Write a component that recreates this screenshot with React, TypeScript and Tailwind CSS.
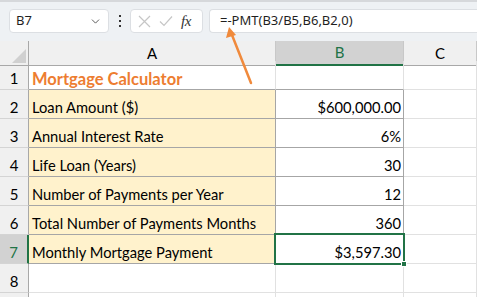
import { ChevronDown } from 'lucide-react'

const cellFont = { fontFamily: 'Lato, "Open Sans", sans-serif' }

type Row = { label: string; value: string }

const rows: Row[] = [
  { label: 'Loan Amount ($)', value: '$600,000.00' },
  { label: 'Annual Interest Rate', value: '6%' },
  { label: 'Life Loan (Years)', value: '30' },
  { label: 'Number of Payments per Year', value: '12' },
  { label: 'Total Number of Payments Months', value: '360' },
  { label: 'Monthly Mortgage Payment', value: '$3,597.30' },
]

function Toolbar() {
  return (
    <div className="h-[41px] bg-[#eef1f4] border-t-2 border-[#d6d8db] flex items-start pt-[7px] pl-[9px] font-['Segoe_UI','Noto_Sans',sans-serif] text-[13px] text-[#1f1f1f]">
      <div className="w-[100px] h-[24px] bg-white border border-[#dcdfe3] rounded-[4px] flex items-center justify-between pl-[6px] pr-[6px]">
        <span>B7</span>
        <ChevronDown className="w-[13px] h-[13px] text-[#444]" strokeWidth={1.6} />
      </div>
      <div className="w-[21px] h-[24px] flex flex-col items-center justify-center gap-[3px]">
        <span className="w-[2px] h-[2px] bg-[#333]" />
        <span className="w-[2px] h-[2px] bg-[#333]" />
        <span className="w-[2px] h-[2px] bg-[#333]" />
      </div>
      <div className="w-[73px] h-[24px] bg-white border border-[#dcdfe3] rounded-[4px] flex items-center pl-[7px] gap-[8px]">
        <svg width="13" height="13" viewBox="0 0 13 13" fill="none" stroke="#c6c6c6" strokeWidth="1.2">
          <path d="M1 1 L12 12 M12 1 L1 12" />
        </svg>
        <svg width="14" height="12" viewBox="0 0 14 12" fill="none" stroke="#c6c6c6" strokeWidth="1.2">
          <path d="M1 6.5 L5 10.5 L13 1.5" />
        </svg>
        <span className="italic text-[15px] text-[#333] font-['Liberation_Serif',serif] tracking-[-0.5px]">fx</span>
      </div>
      <div className="ml-[6px] flex-1 h-[24px] bg-white border border-r-0 border-[#dcdfe3] rounded-l-[4px] flex items-center pl-[10px]">
        <span>=-PMT(B3/B5,B6,B2,0)</span>
      </div>
    </div>
  )
}

function HeaderRow() {
  return (
    <div className="grid grid-cols-[29px_247px_128px_73px] h-[20px] text-[15px]" style={cellFont}>
      <div className="bg-[#f0f0f0] border-r border-b border-[#a8a8a8] relative overflow-hidden">
        <div className="absolute right-[2px] bottom-[2px] w-0 h-0 border-l-[14px] border-l-transparent border-b-[14px] border-b-[#d0d0d0]" />
      </div>
      <div className="bg-[#f0f0f0] border-r border-b border-[#c8c8c8] border-b-[#a8a8a8] flex items-center justify-center">A</div>
      <div className="bg-[#d2d2d2] border-r border-[#c8c8c8] border-b-2 border-b-[#217346] flex items-center justify-center text-[#217346]">B</div>
      <div className="bg-[#f0f0f0] border-r border-b border-[#c8c8c8] border-b-[#a8a8a8] flex items-center justify-center">C</div>
    </div>
  )
}

export default function App() {
  return (
    <div className="w-[477px] h-[297px] overflow-hidden bg-white relative">
      <Toolbar />
      <HeaderRow />
      <div className="grid grid-cols-[29px_247px_128px_73px] auto-rows-[29px] text-[14.7px] text-black" style={cellFont}>
        {/* row 1 */}
        <div className="bg-[#f0f0f0] border-r border-b border-r-[#a8a8a8] border-b-[#d4d4d4] flex items-center justify-center pt-[7px] text-[15px]">1</div>
        <div className="border-r border-b border-r-[#e1e1e1] border-b-[#a6a6a6] flex items-center pl-[3px] pt-[8px] font-bold text-[16.5px] text-[#ed7d31]">
          Mortgage Calculator
        </div>
        <div className="border-r border-b border-r-[#e1e1e1] border-b-[#a6a6a6]" />
        <div className="border-r border-b border-[#e1e1e1]" />

        {rows.map((r, i) => {
          const n = i + 2
          const selected = n === 7
          return [
            <div
              key={`h${n}`}
              className={
                selected
                  ? 'bg-[#d2d2d2] border-r-2 border-b border-r-[#217346] border-b-[#d4d4d4] flex items-center justify-center pt-[7px] text-[15px] text-[#217346]'
                  : 'bg-[#f0f0f0] border-r border-b border-r-[#a8a8a8] border-b-[#d4d4d4] flex items-center justify-center pt-[7px] text-[15px]'
              }
            >
              {n}
            </div>,
            <div key={`a${n}`} className="bg-[#fff2cc] border-r border-b border-[#a6a6a6] flex items-center pl-[3px] pt-[7px] whitespace-nowrap overflow-hidden">
              {r.label}
            </div>,
            <div key={`b${n}`} className="relative border-r border-b border-[#a6a6a6] flex items-center justify-end pr-[2px] pt-[7px]">
              {r.value}
              {selected && (
                <div className="absolute -left-[2px] -top-[2px] right-[-2px] bottom-[-2px] border-2 border-[#217346]">
                  <div className="absolute -right-[4px] -bottom-[4px] w-[6px] h-[6px] bg-[#217346] border border-white" />
                </div>
              )}
            </div>,
            <div key={`c${n}`} className="border-r border-b border-[#e1e1e1]" />,
          ]
        })}

        <div className="bg-[#f0f0f0] border-r border-b border-r-[#a8a8a8] border-b-[#d4d4d4] flex items-center justify-center pt-[7px] text-[15px]">
          8
        </div>
        <div className="border-r border-b border-[#e1e1e1]" />
        <div className="border-r border-b border-[#e1e1e1]" />
        <div className="border-r border-b border-[#e1e1e1]" />

        <div className="bg-[#f0f0f0] border-r border-b border-r-[#a8a8a8] border-b-[#d4d4d4]" />
        <div className="border-r border-b border-[#e1e1e1]" />
        <div className="border-r border-b border-[#e1e1e1]" />
        <div className="border-r border-b border-[#e1e1e1]" />
      </div>

      <svg className="absolute left-0 top-0 pointer-events-none" width="477" height="297">
        <line x1="251" y1="83" x2="232" y2="35" stroke="#f08a3c" strokeWidth="2.5" strokeLinecap="round" />
        <polygon points="229,27 226,38 236,35" fill="#f08a3c" />
      </svg>
    </div>
  )
}
